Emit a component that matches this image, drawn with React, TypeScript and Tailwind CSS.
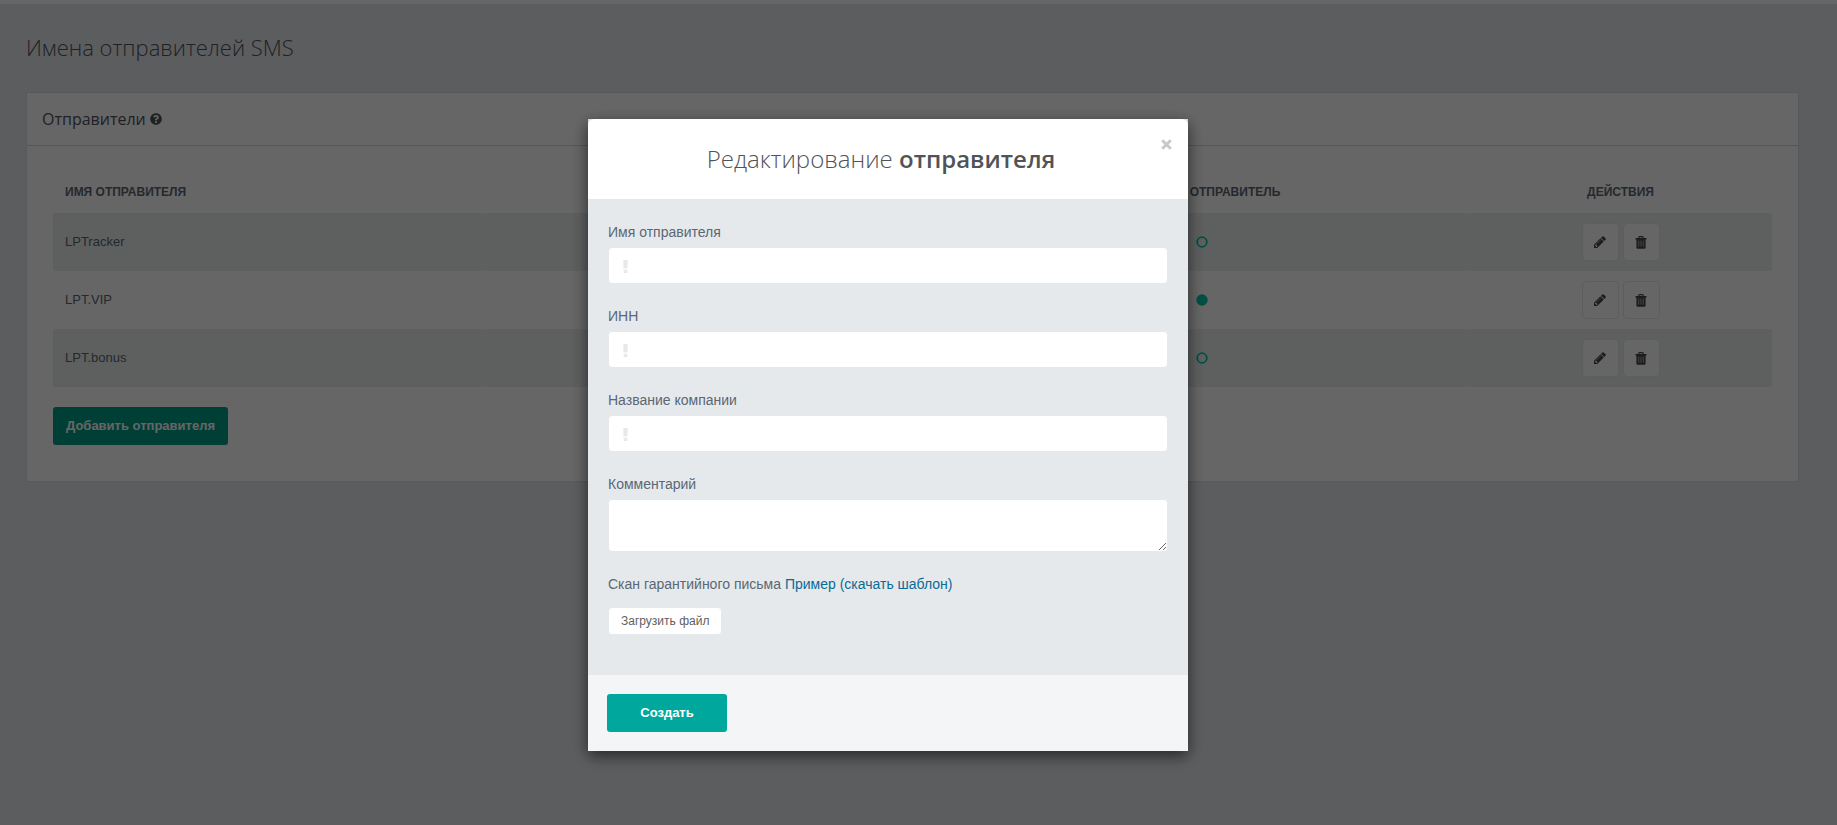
import { useState } from "react";
import { FaQuestionCircle } from "react-icons/fa";

const senders = [
  { id: 1, name: "LPTracker", isDefault: false },
  { id: 2, name: "LPT.VIP", isDefault: true },
  { id: 3, name: "LPT.bonus", isDefault: false },
];

const requiredFields = [
  { id: "sender-name", label: "Имя отправителя" },
  { id: "inn", label: "ИНН" },
  { id: "company", label: "Название компании" },
];

const PencilIcon = () => (
  <svg width="14" height="14" viewBox="0 0 1792 1792" fill="currentColor">
    <path d="M491 1536l91-91-235-235-91 91v107h128v128h107zm523-928q0-22-22-22-10 0-17 7l-542 542q-7 7-7 17 0 22 22 22 10 0 17-7l542-542q7-7 7-17zm-54-192l416 416-832 832h-416v-416zm683 96q0 53-37 90l-166 166-416-416 166-165q36-38 90-38 53 0 91 38l235 234q37 39 37 91z" />
  </svg>
);

const TrashIcon = () => (
  <svg width="12" height="13" viewBox="0 0 12 13" fill="none">
    <path d="M3.8 2V1.4q0-.8.8-.8h2.8q.8 0 .8.8V2" stroke="currentColor" strokeWidth="1.1" />
    <path d="M.5 2h11v1.4h-.9v8.2q0 1.2-1.2 1.2H2.6q-1.2 0-1.2-1.2V3.400H.5z" fill="currentColor" />
    <path d="M3.700 4.600v6M6 4.600v6M8.300 4.600v6" stroke="#b4b4b4" strokeWidth=".9" />
  </svg>
);

const StatusDot = ({ active }: { active: boolean }) => (
  <svg width="12" height="12" viewBox="0 0 12 12" className="mx-auto text-[#00c8a8]">
    <circle
      cx="6"
      cy="6"
      r="4.8"
      stroke="currentColor"
      strokeWidth="1.8"
      fill={active ? "currentColor" : "none"}
    />
  </svg>
);

const iconButton =
  "w-[37px] h-[38px] flex items-center justify-center rounded-sm border border-[#e5e9ec] bg-white text-[#4a4a4a] cursor-pointer";

function SenderModal({ onClose }: { onClose: () => void }) {
  return (
    <div className="fixed inset-0 z-50 flex items-start justify-center bg-black/60 pt-[119px] pr-[61px]">
      <div
        role="dialog"
        aria-modal="true"
        aria-labelledby="modal-title"
        className="w-[600px] bg-[#d9dadb] shadow-[0_5px_15px_rgba(0,0,0,0.6)]"
      >
        <div className="relative flex h-20 items-center justify-center rounded-t-md bg-white pr-3.5">
          <h2
            id="modal-title"
            className="font-['Open_Sans'] text-[24px] leading-8 font-light text-[#505458]"
          >
            Редактирование <b className="font-semibold">отправителя</b>
          </h2>
          <button
            type="button"
            aria-label="Закрыть"
            onClick={onClose}
            className="absolute top-5 right-4 text-[#c8c8c8] cursor-pointer"
          >
            <svg width="11" height="11" viewBox="0 0 11 11" stroke="currentColor" strokeWidth="3">
              <path d="M1.2 1.2l8.6 8.6M9.8 1.2l-8.6 8.6" />
            </svg>
          </button>
        </div>

        <form onSubmit={(e) => e.preventDefault()}>
          <div className="bg-[#e5e9ec] px-5 pt-[23px] pb-10 text-[14px] leading-5 text-[#5b6773]">
            {requiredFields.map((field) => (
              <div key={field.id} className="mb-[22px]">
                <label htmlFor={field.id} className="block mb-[5px]">
                  {field.label}
                </label>
                <div className="relative">
                  <input
                    id={field.id}
                    type="text"
                    className="block w-full h-[37px] rounded-sm border border-[#e5e9ec] bg-white pl-8 pr-3 outline-none"
                  />
                  <svg
                    width="5"
                    height="13"
                    viewBox="0 0 5 13"
                    fill="#e5e9ec"
                    className="absolute left-[15px] top-[13px]"
                  >
                    <path d="M.3 0h4.4L4.5 8.4H.5zM.6 9.8h3.8V13H.6z" />
                  </svg>
                </div>
              </div>
            ))}

            <div className="mb-[22px]">
              <label htmlFor="comment" className="block mb-[5px]">
                Комментарий
              </label>
              <textarea
                id="comment"
                className="block w-full h-[53px] rounded-sm border border-[#e5e9ec] bg-white px-3 py-2 outline-none resize"
              />
            </div>

            <p className="mb-[13px]">
              Скан гарантийного письма{" "}
              <a href="#template" className="text-[#0a6a96]">
                Пример (скачать шаблон)
              </a>
            </p>
            <button
              type="button"
              className="block h-7 rounded-sm border border-[#e5e9ec] bg-white px-3 text-[12px] text-[#5e5e5e] cursor-pointer"
            >
              Загрузить файл
            </button>
          </div>

          <div className="bg-[#f4f5f7] p-[19px]">
            <button
              type="submit"
              className="block w-[120px] h-[38px] rounded-[3px] bg-[#00a79d] text-[13px] font-bold text-white cursor-pointer"
            >
              Создать
            </button>
          </div>
        </form>
      </div>
    </div>
  );
}

export default function App() {
  const [isOpen, setIsOpen] = useState(true);

  return (
    <div className="min-h-screen bg-[#e6e9ed] font-['Liberation_Sans',Arial,sans-serif] text-[#5b6773]">
      <div className="h-1 bg-white" />

      <main className="pl-[26px] pr-[38px] pt-[27px]">
        <h1 className="font-['Open_Sans'] text-[22px] leading-8 font-light text-[#505458]">
          Имена отправителей SMS
        </h1>

        <section className="mt-[29px] border border-[#dcdee0] bg-white">
          <header className="flex h-[53px] items-center gap-1 border-b border-[#d5d7d9] px-[15px] text-[#505458]">
            <h2 className="font-['Open_Sans'] text-[16px]">Отправители</h2>
            <FaQuestionCircle size={12} />
          </header>

          <div className="px-[26px] pt-6 pb-9">
            <table className="w-full table-fixed text-left text-[13px]">
              <colgroup>
                <col />
                <col className="w-[448px]" />
                <col className="w-[534px]" />
                <col className="w-[303px]" />
              </colgroup>
              <thead>
                <tr className="h-[43px] text-[12px] uppercase">
                  <th className="px-3">Имя отправителя</th>
                  <th />
                  <th className="pl-[66px] text-center">Отправитель</th>
                  <th className="text-center">Действия</th>
                </tr>
              </thead>
              <tbody>
                {senders.map((sender) => (
                  <tr key={sender.id} className="group h-[58px]">
                    <td className="px-3 rounded-xs group-odd:bg-[#ebefed]">{sender.name}</td>
                    <td className="rounded-xs group-odd:bg-[#ebefed]" />
                    <td className="rounded-xs group-odd:bg-[#ebefed]">
                      <StatusDot active={sender.isDefault} />
                    </td>
                    <td className="rounded-xs group-odd:bg-[#ebefed]">
                      <div className="flex justify-center gap-1">
                        <button
                          type="button"
                          aria-label="Изменить"
                          onClick={() => setIsOpen(true)}
                          className={iconButton}
                        >
                          <PencilIcon />
                        </button>
                        <button type="button" aria-label="Удалить" className={iconButton}>
                          <TrashIcon />
                        </button>
                      </div>
                    </td>
                  </tr>
                ))}
              </tbody>
            </table>

            <button
              type="button"
              onClick={() => setIsOpen(true)}
              className="mt-5 block h-[38px] rounded-[3px] bg-[#009d86] px-[13px] text-[13px] font-bold text-white cursor-pointer"
            >
              Добавить отправителя
            </button>
          </div>
        </section>
      </main>

      {isOpen && <SenderModal onClose={() => setIsOpen(false)} />}
    </div>
  );
}
